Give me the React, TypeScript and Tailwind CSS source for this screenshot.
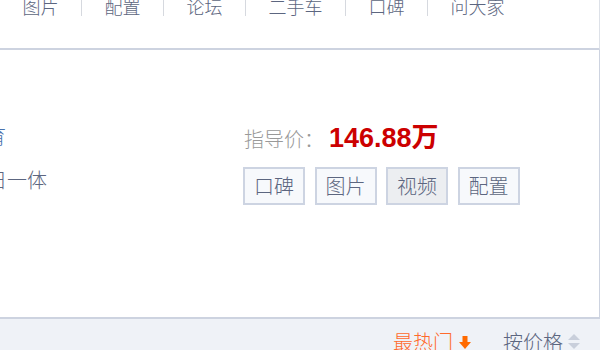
import React from "react";

const navItems = ["图片", "配置", "论坛", "二手车", "口碑", "问大家"];
const tags = ["口碑", "图片", "视频", "配置"];

const font = { fontFamily: '"Noto Sans CJK SC", "Noto Sans", sans-serif' };

export default function App() {
	return (
		<div
			className="w-[600px] h-[350px] overflow-hidden bg-white flex flex-col font-light"
			style={font}>
			{/* top nav strip, scrolled so only the bottom of it shows */}
			<div className="h-[50px] shrink-0 border-b-2 border-r border-b-[#cdd3e0] border-r-[#dde1e8]">
				<div className="flex items-start -mt-[4px]">
					{navItems.map((item, i) => (
						<React.Fragment key={item}>
							{i > 0 && <div className="w-px h-[20px] bg-[#d6d9df]" />}
							<span className="px-[22.5px] text-[18px] leading-[20px] text-[#5c6680]">
								{item}
							</span>
						</React.Fragment>
					))}
				</div>
			</div>

			{/* spec row */}
			<div className="flex-1 flex border-r border-[#cdd3e0]">
				<div className="w-[244px] shrink-0 pt-[76px] text-[20px] leading-[20px] overflow-hidden">
					<div className="-ml-[14px] text-[#4a72ad]">育</div>
					<div className="-ml-[13px] mt-[24px] text-[#5c6680]">日一体</div>
				</div>
				<div className="pt-[68px]">
					<div className="flex items-baseline h-[30px]">
						<span className="text-[20px] text-[#999999] mr-[5px]">指导价：</span>
						<span
							className="text-[27px] font-bold text-[#cc0000]"
							style={{ fontFamily: '"Liberation Sans", "Noto Sans CJK SC", sans-serif' }}>
							146.88万
						</span>
					</div>
					<div className="flex gap-[9.5px] mt-[19px] -ml-[1px]">
						{tags.map((t) => (
							<div
								key={t}
								className={`w-[62px] h-[38px] flex items-center justify-center border-2 border-[#cdd4e2] text-[20px] text-[#5c6680] ${
									t === "视频" ? "bg-[#eceef1]" : "bg-[#f7f9fc]"
								}`}>
								{t}
							</div>
						))}
					</div>
				</div>
			</div>

			{/* sort bar */}
			<div className="h-[33px] shrink-0 border-t-2 border-[#cdd3e0] bg-[#eff2f7] flex justify-end items-start pt-[11px] pr-[20px]">
				<div className="flex items-center text-[20px] leading-[24px] text-[#ff6a2c]">
					最热门
					<svg width="12" height="14" viewBox="0 0 12 14" className="ml-[6px] mt-[2px]">
						<rect x="3.5" y="0" width="5" height="7" fill="#ff6a00" />
						<polygon points="0,6 12,6 6,13" fill="#ff6a00" />
					</svg>
				</div>
				<div className="flex items-center ml-[32px] text-[20px] leading-[24px] text-[#5c6680]">
					按价格
					<svg width="12" height="20" viewBox="0 0 12 20" className="ml-[5px]">
						<polygon points="6,2 12,8 0,8" fill="#c9cfdb" />
						<polygon points="0,11 12,11 6,17" fill="#c9cfdb" />
					</svg>
				</div>
			</div>
		</div>
	);
}
